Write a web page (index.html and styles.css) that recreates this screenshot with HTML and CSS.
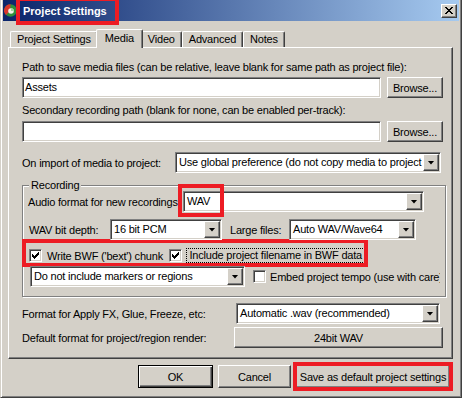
FILE: index.html
```html
<!DOCTYPE html>
<html lang="en">
<head>
  <meta charset="UTF-8" />
  <meta name="viewport" content="width=device-width, initial-scale=1" />
  <title>Project Settings</title>

  <link rel="stylesheet" href="styles.css">
</head>
<body>

  <div class="window">
    <div class="titlebar">
      <svg class="app-icon" width="13" height="13" viewBox="0 0 13 13">
        <circle cx="6.5" cy="6.5" r="6.2" fill="#2f8f3a"/>
        <path d="M6.5 0.3 A6.2 6.2 0 0 0 2 11 L6 7 Z" fill="#d8362a"/>
        <circle cx="7" cy="7" r="2.8" fill="#f0f0ea"/>
        <path d="M7 4.2 A2.8 2.8 0 0 1 9.8 7 L7 7 Z" fill="#9fd49a"/>
      </svg>
      <span class="title mark">Project Settings</span>
      <span class="close-btn">
        <svg width="8" height="7" viewBox="0 0 8 7" shape-rendering="crispEdges">
          <path d="M0 0h2v1H0z M6 0h2v1H6z M1 1h2v1H1z M5 1h2v1H5z M2 2h4v1H2z M3 3h2v1H3z M2 4h4v1H2z M1 5h2v1H1z M5 5h2v1H5z M0 6h2v1H0z M6 6h2v1H6z" fill="#000"/>
        </svg>
      </span>
    </div>

    <div class="tabs">
      <div class="tab">Project Settings</div>
      <div class="tab active">Media</div>
      <div class="tab">Video</div>
      <div class="tab">Advanced</div>
      <div class="tab">Notes</div>
    </div>

    <div class="panel">
      <div class="caption top">Path to save media files (can be relative, leave blank for same path as project file):</div>
      <div class="path-row">
        <div class="edit">Assets</div>
        <div class="btn browse">Browse...</div>
      </div>

      <div class="caption">Secondary recording path (blank for none, can be enabled per-track):</div>
      <div class="path-row">
        <div class="edit"></div>
        <div class="btn browse">Browse...</div>
      </div>

      <div class="field-row import-row">
        <span>On import of media to project:</span>
        <div class="combo combo-import">
          <span class="combo-text">Use global preference (do not copy media to project directory)</span>
          <span class="combo-arrow"></span>
        </div>
      </div>

      <fieldset class="group">
        <legend>Recording</legend>

        <div class="field-row">
          <span class="audio-label">Audio format for new recordings</span>
          <div class="combo combo-audio">
            <span class="combo-text">WAV</span>
            <span class="combo-arrow"></span>
            <span class="mark-box"></span>
          </div>
        </div>

        <div class="field-row bits-row">
          <span class="bits-label">WAV bit depth:</span>
          <div class="combo combo-bits">
            <span class="combo-text">16 bit PCM</span>
            <span class="combo-arrow"></span>
          </div>
          <span class="large-label">Large files:</span>
          <div class="combo combo-large">
            <span class="combo-text">Auto WAV/Wave64</span>
            <span class="combo-arrow"></span>
          </div>
        </div>

        <div class="bwf-row mark">
          <label class="check-item bwf-first">
            <span class="check">
              <svg width="7" height="7" viewBox="0 0 7 7" shape-rendering="crispEdges"><path d="M0 2h1v3H0z M1 3h1v3H1z M2 4h1v3H2z M3 3h1v3H3z M4 2h1v3H4z M5 1h1v3H5z M6 0h1v3H6z" fill="#000"/></svg>
            </span>
            Write BWF ('bext') chunk
          </label>
          <label class="check-item">
            <span class="check">
              <svg width="7" height="7" viewBox="0 0 7 7" shape-rendering="crispEdges"><path d="M0 2h1v3H0z M1 3h1v3H1z M2 4h1v3H2z M3 3h1v3H3z M4 2h1v3H4z M5 1h1v3H5z M6 0h1v3H6z" fill="#000"/></svg>
            </span>
            <span class="focus">Include project filename in BWF data</span>
          </label>
        </div>

        <div class="field-row markers-row">
          <div class="combo combo-markers">
            <span class="combo-text">Do not include markers or regions</span>
            <span class="combo-arrow"></span>
          </div>
          <label class="check-item embed">
            <span class="check"></span>
            <span class="embed-text">Embed project tempo (use with care)</span>
          </label>
        </div>
      </fieldset>

      <div class="field-row format-row">
        <span>Format for Apply FX, Glue, Freeze, etc:</span>
        <div class="combo combo-format">
          <span class="combo-text">Automatic .wav (recommended)</span>
          <span class="combo-arrow"></span>
        </div>
      </div>

      <div class="field-row render-row">
        <span>Default format for project/region render:</span>
        <div class="btn render-btn">24bit WAV</div>
      </div>
    </div>

    <div class="footer">
      <div class="btn default ok">OK</div>
      <div class="btn cancel">Cancel</div>
      <div class="btn save mark">Save as default project settings</div>
    </div>
  </div>

</body>
</html>
```

FILE: styles.css
```css
/* Page */
body {
  margin: 0;
  background: #d4d0c8;
  font-family: "Liberation Sans", Arial, sans-serif;
  font-size: 11px;
  letter-spacing: -0.2px;
  color: #000;
}

/* Dialog frame */
.window {
  box-sizing: border-box;
  width: 462px;
  height: 398px;
  padding: 0 2px 2px;
  border: 1px solid #404040;
  border-top: 0;
  border-left-color: #d4d0c8;
  box-shadow: inset 1px 0 #fff, inset -1px -1px #808080;
}

/* Red annotation marks */
.mark {
  outline: 4px solid #ed1c24;
}
.mark-box {
  position: absolute;
  left: -6px;
  top: -8px;
  width: 46px;
  height: 33px;
  box-sizing: border-box;
  border: 4px solid #ed1c24;
}

/* Title bar */
.titlebar {
  display: flex;
  align-items: center;
  height: 21px;
  padding: 0 2px 0 1px;
  background: linear-gradient(to right, #0a246a, #a6caf0);
}
.app-icon {
  flex: none;
}
.title {
  margin-left: 3px;
  padding: 4px 8px 3px 3px;
  color: #fff;
  font-weight: bold;
  letter-spacing: 0;
  line-height: 13px;
}
.close-btn {
  display: flex;
  align-items: center;
  justify-content: center;
  margin-left: auto;
  width: 16px;
  height: 14px;
  box-sizing: border-box;
  background: #d4d0c8;
  border: 1px solid;
  border-color: #fff #404040 #404040 #fff;
  box-shadow: inset -1px -1px #808080;
}

/* Tabs */
.tabs {
  display: flex;
  align-items: flex-end;
  height: 26px;
  padding-left: 7px;
}
.tab {
  box-sizing: border-box;
  height: 16px;
  padding: 0 6px;
  line-height: 15px;
  white-space: nowrap;
  border: 1px solid;
  border-bottom: 0;
  border-color: #fff #404040 #fff #fff;
  border-radius: 2px 2px 0 0;
  box-shadow: inset -1px 0 #808080;
  background: #d4d0c8;
}
.tab.active {
  position: relative;
  z-index: 1;
  height: 19px;
  padding: 0 8px;
  margin: 0 -2px -1px;
  line-height: 17px;
}

/* Tab page */
.panel {
  margin: 0 6px 0 5px;
  padding: 0 9px 10px 13px;
  border: 1px solid;
  border-color: #fff #404040 #404040 #fff;
  box-shadow: inset -1px -1px #808080;
}

.caption {
  height: 13px;
  line-height: 13px;
  margin-top: 6px;
  white-space: nowrap;
}
.caption.top {
  margin-top: 13px;
}

.path-row {
  display: flex;
  gap: 6px;
  margin-top: 3px;
}
.path-row + .caption {
  margin-top: 6px;
}
.path-row + .path-row,
.caption + .path-row {
  margin-top: 4px;
}
.caption.top + .path-row {
  margin-top: 3px;
}

.field-row {
  display: flex;
  align-items: center;
  height: 21px;
  white-space: nowrap;
}

/* Sunken edit field */
.edit {
  flex: 1;
  box-sizing: border-box;
  height: 21px;
  padding: 0 2px;
  line-height: 19px;
  background: #fff;
  border: 1px solid;
  border-color: #808080 #fff #fff #808080;
  box-shadow: inset 1px 1px #404040, inset -1px -1px #d4d0c8;
}

/* Raised push button */
.btn {
  display: flex;
  align-items: center;
  justify-content: center;
  box-sizing: border-box;
  height: 21px;
  white-space: nowrap;
  background: #d4d0c8;
  border: 1px solid;
  border-color: #fff #404040 #404040 #fff;
  box-shadow: inset -1px -1px #808080;
}
.btn.default {
  border-color: #000;
  box-shadow: inset 1px 1px #fff, inset -1px -1px #404040, inset -2px -2px #808080;
}
.browse {
  width: 56px;
}

/* Drop-down combo */
.combo {
  position: relative;
  display: flex;
  box-sizing: border-box;
  height: 21px;
  padding: 1px;
  background: #fff;
  border: 1px solid;
  border-color: #808080 #fff #fff #808080;
  box-shadow: inset 1px 1px #404040, inset -1px -1px #d4d0c8;
}
.combo-text {
  flex: 1;
  padding-left: 2px;
  line-height: 17px;
  overflow: hidden;
  white-space: nowrap;
}
.combo-arrow {
  display: flex;
  align-items: center;
  justify-content: center;
  flex: none;
  width: 16px;
  box-sizing: border-box;
  background: #d4d0c8;
  border: 1px solid;
  border-color: #fff #404040 #404040 #fff;
  box-shadow: inset -1px -1px #808080;
}
.combo-arrow::after {
  content: "";
  width: 7px;
  height: 4px;
  background: #000;
  clip-path: polygon(0 0, 100% 0, 50% 100%);
}

.import-row {
  margin-top: 10px;
}
.combo-import {
  width: 266px;
  margin: 0 2px 0 auto;
}

/* Recording group box */
.group {
  min-width: 0;
  margin: 6px -3px 0 0;
  padding: 0 5px 9px 6px;
  border: 1px solid #808080;
  box-shadow: 1px 1px #fff, inset 1px 1px #fff;
}
.group legend {
  padding: 0 2px;
  line-height: 12px;
  background: #d4d0c8;
}

.audio-label {
  margin-left: -1px;
}
.combo-audio {
  width: 241px;
  margin: 0 16px 0 auto;
}

.bits-row {
  margin-top: 7px;
}
.bits-label {
  width: 81px;
}
.combo-bits {
  width: 112px;
}
.large-label {
  width: 59px;
  margin-left: 8px;
}
.combo-large {
  width: 127px;
}

/* Checkboxes */
.check-item {
  display: flex;
  align-items: center;
  white-space: nowrap;
}
.check {
  display: flex;
  align-items: center;
  justify-content: center;
  flex: none;
  width: 13px;
  height: 13px;
  margin-right: 5px;
  box-sizing: border-box;
  background: #fff;
  border: 1px solid;
  border-color: #808080 #fff #fff #808080;
  box-shadow: inset 1px 1px #404040, inset -1px -1px #d4d0c8;
}

.bwf-row {
  display: flex;
  box-sizing: border-box;
  width: 338px;
  height: 20px;
  margin: 3px 0 0 -3px;
  padding: 6px 0 1px 3px;
}
.bwf-first {
  width: 145px;
}
.focus {
  padding: 0 2px;
  line-height: 13px;
  outline: 1px dotted #000;
}

.markers-row {
  margin-top: 3px;
}
.combo-markers {
  width: 215px;
  margin-left: 1px;
}
.embed {
  flex: 1;
  min-width: 0;
  margin-left: 8px;
}
.embed .check {
  margin-right: 4px;
}
.embed-text {
  overflow: hidden;
}

.format-row {
  margin-top: 6px;
}
.combo-format {
  width: 204px;
  margin: 0 3px 0 auto;
}

.render-row {
  margin-top: 3px;
}
.render-btn {
  width: 209px;
  margin-left: auto;
}

/* Dialog buttons */
.footer {
  display: flex;
  justify-content: flex-end;
  gap: 5px;
  margin-top: 6px;
  padding-right: 9px;
}
.footer .btn {
  height: 23px;
}
.ok {
  width: 75px;
}
.cancel {
  width: 73px;
}
.save {
  width: 154px;
  outline-offset: -1px;
}
```
